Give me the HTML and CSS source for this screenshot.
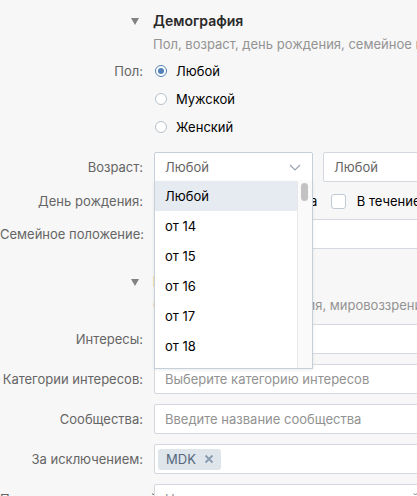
FILE: index.html
```html
<!DOCTYPE html>
<html>
  <head>
    <meta charset="utf-8">
    <link rel="stylesheet" href="styles.css">
  </head>
  <body>
    <div class="form">

      <div class="section-head">
        <div class="label"><span class="tri"></span></div>
        <div>
          <div class="title">Демография</div>
          <div class="subtitle">Пол, возраст, день рождения, семейное положение</div>
        </div>
      </div>

      <div class="row radio-row first">
        <div class="label">Пол:</div>
        <div class="radio checked"></div><span>Любой</span>
      </div>
      <div class="row radio-row">
        <div class="label"></div>
        <div class="radio"></div><span>Мужской</span>
      </div>
      <div class="row radio-row">
        <div class="label"></div>
        <div class="radio"></div><span>Женский</span>
      </div>

      <div class="row age-row">
        <div class="label">Возраст:</div>
        <div class="select-wrap">
          <div class="select open">
            <span>Любой</span>
            <svg class="chevron" width="12" height="7" viewBox="0 0 12 7"><path d="M1 1l5 5 5-5" fill="none" stroke="#99a2ad" stroke-width="1.2"/></svg>
          </div>
          <!-- open dropdown, lies over the rows below -->
          <div class="dropdown">
            <div class="options">
              <div class="option active">Любой</div>
              <div class="option">от 14</div>
              <div class="option">от 15</div>
              <div class="option">от 16</div>
              <div class="option">от 17</div>
              <div class="option">от 18</div>
              <div class="option">от 19</div>
            </div>
            <div class="scrollbar"><div class="thumb"></div></div>
          </div>
        </div>
        <div class="select second"><span>Любой</span></div>
      </div>

      <div class="row bday-row">
        <div class="label">День рождения:</div>
        <div class="check"></div><span class="check-text">Сегодня</span>
        <div class="check"></div><span class="check-text">Завтра</span>
        <div class="check"></div><span class="check-text">В течение недели</span>
      </div>

      <div class="row family-row">
        <div class="label">Семейное положение:</div>
        <div class="input"><span class="value">Не выбрано</span></div>
      </div>

      <div class="section-head second-head">
        <div class="label"><span class="tri"></span></div>
        <div>
          <div class="title">Интересы</div>
          <div class="subtitle">Сообщества, путешествия, мировоззрение</div>
        </div>
      </div>

      <div class="row field-row">
        <div class="label">Интересы:</div>
        <div class="input"><span class="ph">Введите интересы</span></div>
      </div>
      <div class="row field-row">
        <div class="label">Категории интересов:</div>
        <div class="input"><span class="ph">Выберите категорию интересов</span></div>
      </div>
      <div class="row field-row">
        <div class="label">Сообщества:</div>
        <div class="input"><span class="ph">Введите название сообщества</span></div>
      </div>
      <div class="row field-row">
        <div class="label">За исключением:</div>
        <div class="input tokens">
          <span class="token">MDK
            <svg class="x" width="10" height="10" viewBox="0 0 10 10"><path d="M1.5 1.5l7 7M8.5 1.5l-7 7" stroke="#8a9cb0" stroke-width="1.8"/></svg>
          </span>
        </div>
      </div>
      <div class="row field-row">
        <div class="label">Посетители приложений:</div>
        <div class="input"><span class="ph">Начните вводить название приложений</span></div>
      </div>

    </div>
  </body>
</html>
```

FILE: styles.css
```css
body {
  margin: 0;
  background-color: #f7f7f7;
  font-family: Inter, "Liberation Sans", Arial, sans-serif;
  font-size: 13px;
  color: #000;
  overflow: hidden;
}
.form {
  width: 490px;
}
.row {
  display: flex;
  align-items: center;
  white-space: nowrap;
}
.label {
  flex: none;
  width: 143px;
  padding-right: 11px;
  text-align: right;
  color: #656565;
  white-space: nowrap;
}

/* section headers */
.section-head {
  display: flex;
  padding-top: 12px;
}
.section-head .label {
  padding-right: 14px;
  width: 139px;
  line-height: 18px;
}
.tri {
  display: inline-block;
  width: 0;
  height: 0;
  border-left: 4px solid transparent;
  border-right: 4px solid transparent;
  border-top: 7px solid #828282;
  vertical-align: 1px;
}
.title {
  font-weight: 600;
  font-size: 14px;
  line-height: 18px;
  color: #2a2a2a;
}
.subtitle {
  margin-top: 5px;
  line-height: 18px;
  color: #939393;
  white-space: nowrap;
}
.second-head {
  padding-top: 24px;
}

/* radios */
.radio-row {
  height: 28px;
}
.radio-row.first {
  margin-top: 4px;
}
.radio {
  width: 12px;
  height: 12px;
  box-sizing: border-box;
  border: 1px solid #b7c0ca;
  border-radius: 50%;
  margin-left: 1px;
  margin-right: 9px;
  background: #fff;
  position: relative;
}
.radio.checked {
  border-color: #5181b8;
}
.radio.checked::after {
  content: "";
  position: absolute;
  left: 2px;
  top: 2px;
  width: 6px;
  height: 6px;
  border-radius: 50%;
  background: #5181b8;
}

/* selects and inputs */
.age-row {
  margin-top: 11px;
}
.select-wrap {
  position: relative;
}
.select, .input {
  box-sizing: border-box;
  height: 30px;
  border: 1px solid #d3d9de;
  border-radius: 2px;
  background: #fff;
  padding: 0 10px;
  display: flex;
  align-items: center;
  color: #656565;
}
.select {
  width: 159px;
  justify-content: space-between;
}
.select.open {
  border-radius: 2px 2px 0 0;
  border-color: #c5d0db;
}
.chevron {
  margin-right: 1px;
}
.select.second {
  margin-left: 10px;
  width: 160px;
}
.input {
  width: 327px;
}
.input .value {
  color: #000;
}
.ph {
  color: #929292;
}

.dropdown {
  position: absolute;
  left: 0;
  top: 29px;
  width: 159px;
  height: 188px;
  box-sizing: border-box;
  border: 1px solid #c5d0db;
  border-top: none;
  background: #fff;
  overflow: hidden;
  display: flex;
  z-index: 5;
  box-shadow: 0 1px 3px rgba(0, 0, 0, 0.08);
}
.options {
  flex: 1;
}
.option {
  height: 30px;
  line-height: 30px;
  padding-left: 10px;
  color: #000;
}
.option.active {
  background: #e5ebf1;
}
.scrollbar {
  flex: none;
  width: 14px;
  border-left: 1px solid #e8e8e8;
  background: #fafafa;
}
.thumb {
  width: 7px;
  height: 18px;
  margin: 2px 0 0 3px;
  border-radius: 4px;
  background: #c2c2c2;
}

/* birthday checkboxes */
.bday-row {
  height: 30px;
  margin-top: 4px;
}
.check {
  width: 15px;
  height: 15px;
  box-sizing: border-box;
  border: 1px solid #c0cad5;
  border-radius: 3px;
  background: #fff;
}
.check-text {
  margin-left: 11px;
  margin-right: 13.5px;
}

.family-row {
  margin-top: 3px;
}

/* interest fields */
.field-row {
  margin-top: 10px;
}
.tokens {
  padding-left: 3px;
}
.token {
  display: inline-flex;
  align-items: center;
  height: 21px;
  padding: 0 7px 0 8px;
  border-radius: 3px;
  background: #dee5eb;
  color: #55677d;
}
.token .x {
  margin-left: 8px;
}
```
